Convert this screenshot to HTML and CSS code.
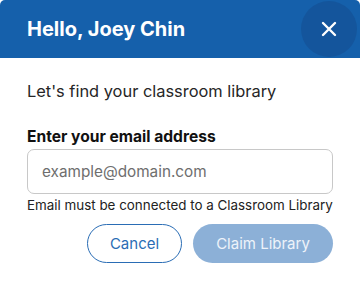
FILE: index.html
```html
<!DOCTYPE html>
<html>
<head>
<meta charset="utf-8">
<link rel="stylesheet" href="styles.css">
</head>
<body>
<div class="modal">
  <div class="header">
    <h1 class="title">Hello, Joey Chin</h1>
    <button class="close" aria-label="Close">
      <svg width="16" height="16" viewBox="0 0 16 16"><path d="M2 2 L14 14 M14 2 L2 14" stroke="#fff" stroke-width="2.4" stroke-linecap="round"/></svg>
    </button>
  </div>
  <div class="content">
    <p class="intro">Let's find your classroom library</p>
    <label class="label" for="email">Enter your email address</label>
    <input class="input" id="email" type="text" placeholder="example@domain.com">
    <p class="help">Email must be connected to a Classroom Library</p>
    <div class="actions">
      <button class="btn btn-outline">Cancel</button>
      <button class="btn btn-primary">Claim Library</button>
    </div>
  </div>
</div>
</body>
</html>
```
FILE: styles.css
```css
* { box-sizing: border-box; }
html, body { margin: 0; padding: 0; background: #fff; }
body { font-family: Inter, "Liberation Sans", sans-serif; color: #1e1e1e; }
.modal { width: 360px; height: 281px; background: #fff; }
.header {
  height: 58px;
  background: #1560ab;
  border-radius: 5px 5px 0 0;
  display: flex;
  align-items: center;
  justify-content: space-between;
  padding: 0 3px 0 27px;
}
.title { margin: 0; color: #fff; font-size: 20px; font-weight: 700; letter-spacing: 0; }
.close {
  width: 56px; height: 56px; border-radius: 50%;
  background: #14559c; border: 0; padding: 0;
  display: flex; align-items: center; justify-content: center;
}
.content { padding: 21px 27px 0; display: flex; flex-direction: column; }
.intro { margin: 0; font-size: 16.4px; line-height: 24px; color: #262626; }
.label { margin-top: 23px; font-size: 15.6px; line-height: 22px; font-weight: 700; color: #111; }
.input {
  height: 45px; width: 100%; margin: 0.5px 0 0;
  border: 1px solid #c8c8c8; border-radius: 7px;
  padding: 0 14px; font-family: inherit; font-size: 15.3px; color: #333;
}
.input::placeholder { color: #6e6e6e; }
.help { margin: 2px 0 0; font-size: 13.4px; line-height: 18px; color: #222; }
.actions { margin-top: 10px; display: flex; justify-content: flex-end; gap: 11px; }
.btn {
  height: 39px; border-radius: 20px; font-family: inherit; font-size: 15px;
  padding: 0; display: flex; align-items: center; justify-content: center;
}
.btn-outline { width: 95px; background: #fff; border: 1.5px solid #2a6db5; color: #2a6db5; }
.btn-primary { width: 140px; background: #8cb0d7; border: 0; color: #eef3fa; }
```
